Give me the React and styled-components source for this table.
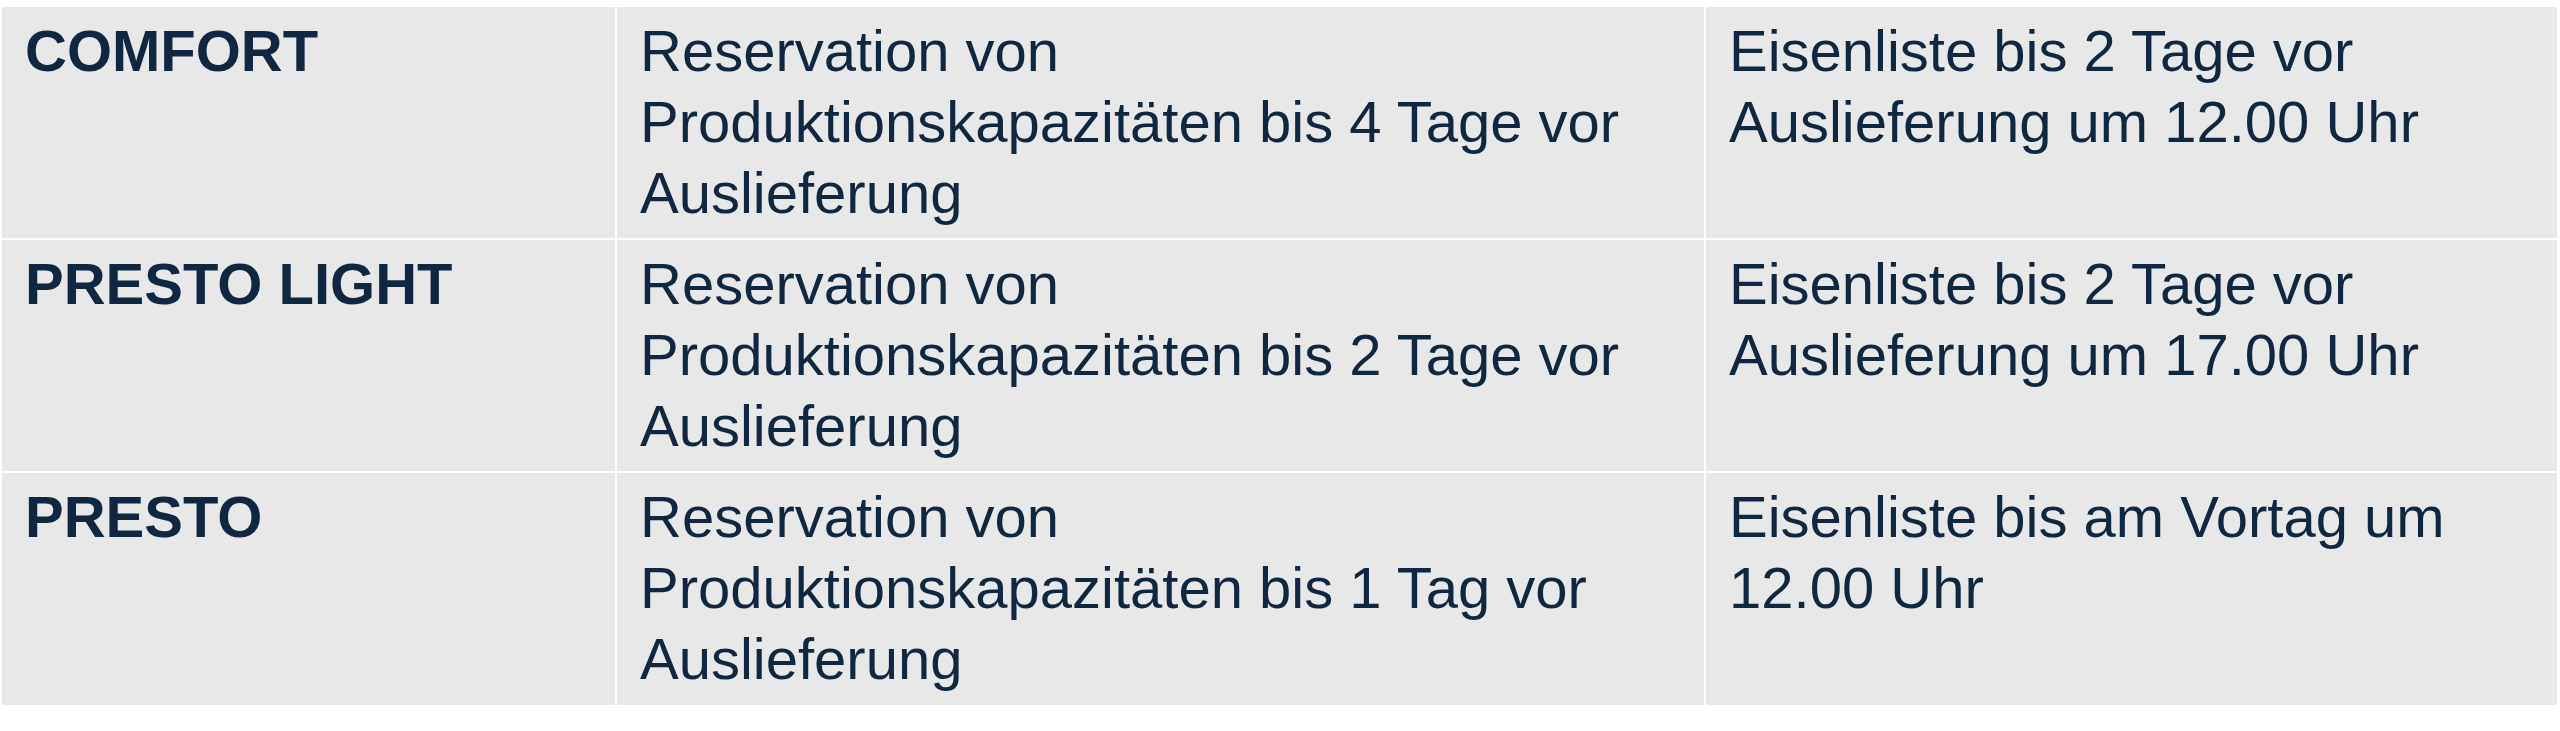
import React from "react";
import styled, { createGlobalStyle } from "styled-components";

const GlobalStyle = createGlobalStyle`
  html, body {
    margin: 0;
    padding: 0;
    background: #ffffff;
  }
`;

const rows = [
  {
    name: "COMFORT",
    reservation: "Reservation von Produktionskapazitäten bis 4 Tage vor Auslieferung",
    list: "Eisenliste bis 2 Tage vor Auslieferung um 12.00 Uhr",
  },
  {
    name: "PRESTO LIGHT",
    reservation: "Reservation von Produktionskapazitäten bis 2 Tage vor Auslieferung",
    list: "Eisenliste bis 2 Tage vor Auslieferung um 17.00 Uhr",
  },
  {
    name: "PRESTO",
    reservation: "Reservation von Produktionskapazitäten bis 1 Tag vor Auslieferung",
    list: "Eisenliste bis am Vortag um 12.00 Uhr",
  },
];

const App = () => {
  return (
    <>
      <GlobalStyle />
      <Table>
        {rows.map((row) => (
          <React.Fragment key={row.name}>
            <Cell $bold>{row.name}</Cell>
            <Cell>{row.reservation}</Cell>
            <Cell>{row.list}</Cell>
          </React.Fragment>
        ))}
      </Table>
    </>
  );
};

export default App;

const Table = styled.div`
  display: grid;
  grid-template-columns: 613px 1087px 851px;
  grid-template-rows: 231px 231px 232px;
  gap: 2px;
  margin: 7px 0 0 2px;
  width: 2555px;
  background: #ffffff;
  font-family: "Liberation Sans", Arial, sans-serif;
`;

const Cell = styled.div`
  background-color: #e8e8e8;
  color: #0f2740;
  font-size: 58px;
  line-height: 71px;
  font-weight: ${(p) => (p.$bold ? 700 : 400)};
  padding: 8px 60px 0 23px;
  box-sizing: border-box;
  overflow: hidden;
`;
